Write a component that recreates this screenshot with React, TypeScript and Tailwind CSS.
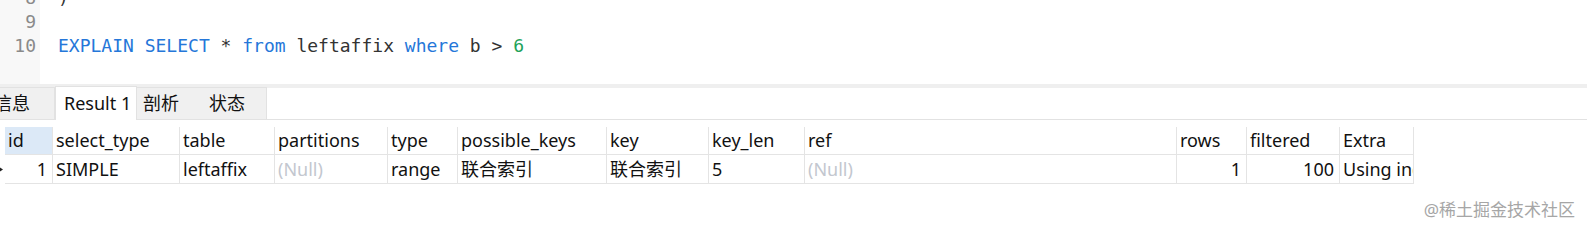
import React from "react";

type Col = { name: string; w: string; value: string; align?: "right"; muted?: boolean; active?: boolean };

const cols: Col[] = [
  { name: "id", w: "w-[48px]", value: "1", align: "right", active: true },
  { name: "select_type", w: "w-[127px]", value: "SIMPLE" },
  { name: "table", w: "w-[95px]", value: "leftaffix" },
  { name: "partitions", w: "w-[113px]", value: "(Null)", muted: true },
  { name: "type", w: "w-[70px]", value: "range" },
  { name: "possible_keys", w: "w-[149px]", value: "联合索引" },
  { name: "key", w: "w-[102px]", value: "联合索引" },
  { name: "key_len", w: "w-[96px]", value: "5" },
  { name: "ref", w: "w-[372px]", value: "(Null)", muted: true },
  { name: "rows", w: "w-[70px]", value: "1", align: "right" },
  { name: "filtered", w: "w-[93px]", value: "100", align: "right" },
  { name: "Extra", w: "w-[74px]", value: "Using index condition" },
];

const ui = "font-['Noto_Sans','Noto_Sans_CJK_SC',sans-serif]";

function CodeEditor() {
  return (
    <div className="flex h-[84px] overflow-hidden bg-white font-['DejaVu_Sans_Mono','Liberation_Mono',monospace] text-[18px] leading-[24px]">
      <div className="w-[40px] shrink-0 bg-[#f8f8f8] pr-[4px] text-right text-[#8a8a8a]">
        <div className="mt-[-14px]">
          <div>8</div>
          <div>9</div>
          <div>10</div>
        </div>
      </div>
      <div className="pl-[18px] text-[#333]">
        <div className="mt-[-14px] whitespace-pre">
          <div>)</div>
          <div> </div>
          <div>
            <span className="text-[#2577d9]">EXPLAIN SELECT</span> * <span className="text-[#2577d9]">from</span> leftaffix{" "}
            <span className="text-[#2577d9]">where</span> b &gt; <span className="text-[#1fa35b]">6</span>
          </div>
        </div>
      </div>
    </div>
  );
}

function Tabs() {
  return (
    <div className={`flex h-[32px] items-end border-b border-[#e2e2e2] text-[18px] text-[#111] ${ui}`}>
      <div className="flex h-[32px] w-[55px] items-center justify-end overflow-hidden border-r border-t border-[#e2e2e2] bg-[#f0f0f0] pr-[24px]">
        <span className="whitespace-nowrap">信息</span>
      </div>
      <div className="mb-[-1px] flex h-[34px] w-[82px] items-center border-x border-t border-[#e2e2e2] bg-white pl-[8px]">
        Result 1
      </div>
      <div className="flex h-[32px] w-[56px] items-center border-t border-[#e2e2e2] bg-[#f0f0f0] pl-[6px]">
        剖析
      </div>
      <div className="flex h-[32px] w-[74px] items-center border-r border-t border-[#e2e2e2] bg-[#f0f0f0] pl-[16px]">
        状态
      </div>
    </div>
  );
}

function ResultGrid() {
  return (
    <div className={`pt-[7px] text-[18px] text-[#111] ${ui}`}>
      <div className="flex h-[28px] w-[1414px]">
        <div className="w-[5px] shrink-0" />
        {cols.map((c) => (
          <div
            key={c.name}
            className={`${c.w} flex shrink-0 items-center overflow-hidden whitespace-nowrap border-b border-r border-[#e4e4e4] pl-[3px] ${
              c.active ? "bg-[#dce9f7]" : ""
            }`}
          >
            {c.name}
          </div>
        ))}
      </div>
      <div className="flex h-[29px] w-[1414px]">
        <div className="relative w-[5px] shrink-0 overflow-hidden">
          <svg width="5" height="29" viewBox="0 0 5 29" className="block">
            <polygon points="-2,11 3,14.5 -2,18" fill="#222" />
          </svg>
        </div>
        {cols.map((c) => (
          <div
            key={c.name}
            className={`${c.w} flex shrink-0 items-center overflow-hidden whitespace-nowrap border-b border-r border-[#e4e4e4] ${
              c.align === "right" ? "justify-end pr-[5px]" : "pl-[3px]"
            } ${c.muted ? "text-[#c3c7cf]" : ""}`}
          >
            {c.value}
          </div>
        ))}
      </div>
    </div>
  );
}

export default function App() {
  return (
    <div className="relative h-[232px] w-[1587px] overflow-hidden bg-white">
      <CodeEditor />
      <div className="h-[4px] bg-[#efefef]" />
      <Tabs />
      <ResultGrid />
      <div
        className={`absolute right-[12px] top-[197px] text-[17px] text-[#a6a6a6] ${ui}`}
      >
        @稀土掘金技术社区
      </div>
    </div>
  );
}
